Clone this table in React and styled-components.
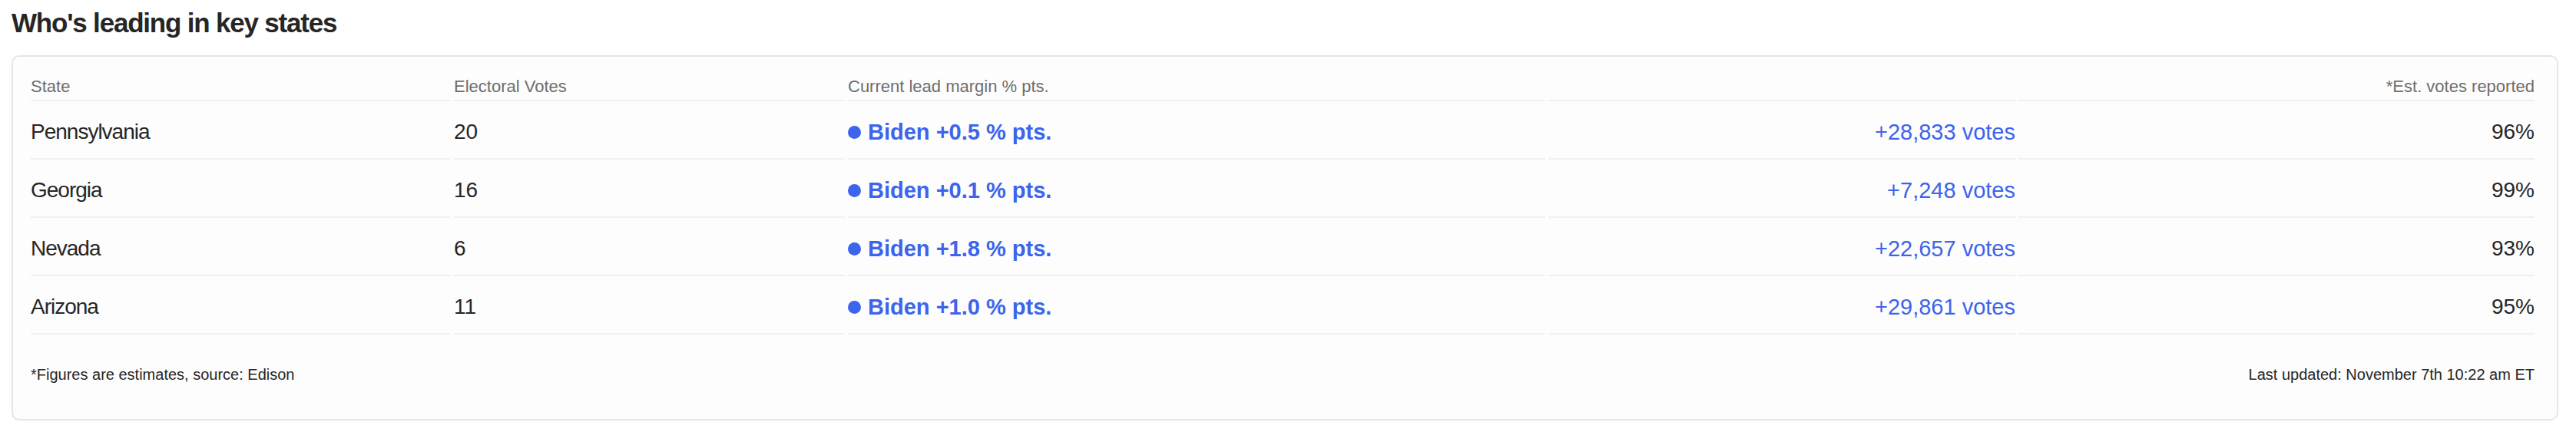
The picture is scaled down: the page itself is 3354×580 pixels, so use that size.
import React from 'react';
import styled, { createGlobalStyle } from 'styled-components';

const GlobalStyle = createGlobalStyle`
  body {
    margin: 0;
    background: #ffffff;
    font-family: "Liberation Sans", Arial, sans-serif;
    color: #262626;
  }
`;

const BLUE = '#3c64ec';

const Page = styled.div`
  padding: 8px 23px 0 15px;
`;

const Title = styled.h2`
  margin: 0 0 20px;
  font-family: "Liberation Sans Narrow", "Liberation Sans", sans-serif;
  font-weight: 700;
  font-size: 35px;
  letter-spacing: -1.2px;
  line-height: 44px;
  color: #262626;
`;

const Card = styled.div`
  border: 2px solid #e6e6e6;
  border-radius: 10px;
  background: #fdfdfd;
  padding: 26px 29px 0 23px;
`;

const Row = styled.div`
  display: grid;
  grid-template-columns: 547fr 509fr 908fr 608fr 672fr;
  column-gap: 4px;
`;

const HeadCell = styled.div`
  font-size: 22px;
  line-height: 26px;
  color: #6e6e6e;
  padding-bottom: 4px;
  border-bottom: 2px solid #f0f0f0;
  text-align: ${(p) => p.$align || 'left'};
`;

const Cell = styled.div`
  box-sizing: border-box;
  height: 76px;
  padding-top: 6px;
  display: flex;
  align-items: center;
  justify-content: ${(p) => (p.$align === 'right' ? 'flex-end' : 'flex-start')};
  border-bottom: 2px solid #f0f0f0;
  font-size: ${(p) => p.$size || 28}px;
  color: ${(p) => p.$color || '#262626'};
  letter-spacing: ${(p) => (p.$tight ? '-1px' : '0')};
`;

const Lead = styled.span`
  display: flex;
  align-items: center;
  gap: 9px;
  font-weight: 700;
  font-size: 29px;
  color: ${BLUE};
`;

const Dot = styled.span`
  width: 17px;
  height: 17px;
  border-radius: 50%;
  background: ${BLUE};
  flex: none;
`;

const Footer = styled.div`
  display: flex;
  justify-content: space-between;
  padding: 40px 0 46px;
  font-size: 20px;
  line-height: 24px;
  color: #262626;
`;

const states = [
  { name: 'Pennsylvania', ev: 20, margin: '+0.5', votes: '+28,833', reported: '96%' },
  { name: 'Georgia', ev: 16, margin: '+0.1', votes: '+7,248', reported: '99%' },
  { name: 'Nevada', ev: 6, margin: '+1.8', votes: '+22,657', reported: '93%' },
  { name: 'Arizona', ev: 11, margin: '+1.0', votes: '+29,861', reported: '95%' },
];

export default function App() {
  return (
    <Page>
      <GlobalStyle />
      <Title>Who's leading in key states</Title>
      <Card>
        <Row>
          <HeadCell>State</HeadCell>
          <HeadCell>Electoral Votes</HeadCell>
          <HeadCell>Current lead margin % pts.</HeadCell>
          <HeadCell />
          <HeadCell $align="right">*Est. votes reported</HeadCell>
        </Row>
        {states.map((s) => (
          <Row key={s.name}>
            <Cell $tight>{s.name}</Cell>
            <Cell>{s.ev}</Cell>
            <Cell>
              <Lead>
                <Dot />
                Biden {s.margin} % pts.
              </Lead>
            </Cell>
            <Cell $align="right" $color={BLUE} $size={29}>{s.votes} votes</Cell>
            <Cell $align="right">{s.reported}</Cell>
          </Row>
        ))}
        <Footer>
          <span>*Figures are estimates, source: Edison</span>
          <span>Last updated: November 7th 10:22 am ET</span>
        </Footer>
      </Card>
    </Page>
  );
}
